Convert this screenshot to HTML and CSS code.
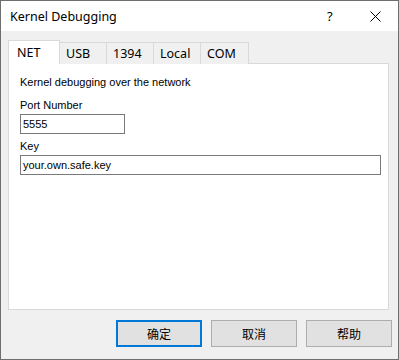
FILE: index.html
```html
<!doctype html>
<html>
<head>
<meta charset="utf-8">
<title>Kernel Debugging</title>
<link rel="stylesheet" href="styles.css">
</head>
<body>
<div class="window">
	<div class="titlebar">
		<span class="title">Kernel Debugging</span>
		<span class="help">?</span>
		<span class="close">
			<svg width="11" height="11" viewBox="0 0 11 11"><path d="M0.5 0.5 L10.5 10.5 M10.5 0.5 L0.5 10.5" stroke="#000" stroke-width="1" fill="none"/></svg>
		</span>
	</div>
	<div class="content">
		<div class="tabs">
			<span class="tab tab-net active">NET</span>
			<span class="tab">USB</span>
			<span class="tab">1394</span>
			<span class="tab">Local</span>
			<span class="tab tab-com">COM</span>
		</div>
		<div class="panel">
			<p class="desc">Kernel debugging over the network</p>
			<label class="label">Port Number</label>
			<div class="field field-port">5555</div>
			<label class="label">Key</label>
			<div class="field field-key">your.own.safe.key</div>
		</div>
		<div class="buttons">
			<span class="btn default">确定</span>
			<span class="btn">取消</span>
			<span class="btn">帮助</span>
		</div>
	</div>
</div>
</body>
</html>
```
FILE: styles.css
```css
body{ margin:0; background:#f0f0f0; font-family:"Noto Sans","Noto Sans CJK SC",sans-serif; color:#000;}
.window{ width:399px; height:360px; box-sizing:border-box; border:1px solid #6e6e6e; background:#f0f0f0; display:flex; flex-direction:column;}
.titlebar{ height:30px; background:#fff; display:flex; align-items:center; padding-left:9px;}
.title{ font-size:12.5px; flex:1;}
.help{ font-size:13px; width:20px; margin-right:23px;}
.close{ display:flex; width:11px; margin-right:17px;}
.content{ padding:9px 9px 0 7px;}
.tabs{ display:flex; align-items:flex-end; height:24px; margin-bottom:-1px; position:relative;}
.tab{ box-sizing:border-box; height:22px; width:48px; margin-left:-1px; border:1px solid #d9d9d9; border-bottom:none; font-size:12.5px; padding:1px 0 0 6px; line-height:19px; background:#f0f0f0;}
.tab-net{ width:52px; margin-left:0;}
.tab-com{ width:49px;}
.tab.active{ height:24px; background:#fff; padding:2px 0 0 8px; position:relative; z-index:1;}
.panel{ box-sizing:border-box; height:247px; border:1px solid #d9d9d9; background:#fff; padding:10px 8px 0 11px; font-family:"Liberation Sans","Noto Sans CJK SC",sans-serif; font-size:11px;}
.desc{ margin:0; height:23px; line-height:16px;}
.label{ display:block; line-height:16px; height:17px;}
.field{ box-sizing:border-box; height:20px; border:1px solid #7a7a7a; line-height:18px; padding-left:2px; margin-bottom:4px;}
.field-port{ width:105px;}
.field-key{ width:361px;}
.buttons{ display:flex; justify-content:flex-end; gap:9px; margin-top:10px; margin-right:-3px;}
.btn{ box-sizing:border-box; width:86px; height:27px; border:1px solid #adadad; background:#e1e1e1; font-family:"Noto Sans CJK SC",sans-serif; font-size:12px; display:flex; align-items:center; justify-content:center;}
.btn.default{ border:2px solid #0078d7;}
```
